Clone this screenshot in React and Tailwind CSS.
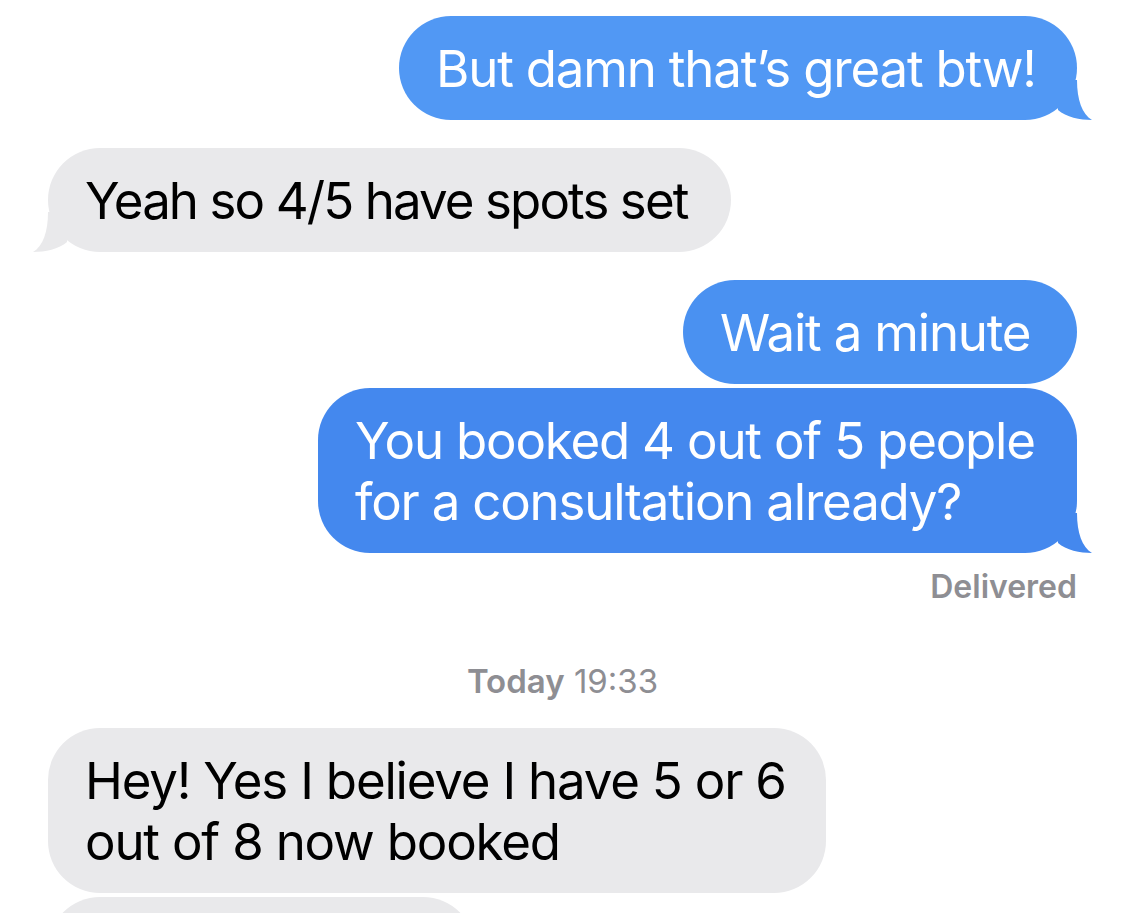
import React from "react";

// iMessage bubble tail, drawn for the right side; the left one is mirrored
const Tail = ({ side, color }) => (
    <svg
        width="40"
        height="40"
        viewBox="0 0 40 40"
        className={
            side === "right"
                ? "absolute bottom-0 right-[-15px]"
                : "absolute bottom-0 left-[-15px] -scale-x-100"
        }
    >
        <path d="M25 0 C25 20 30 34 40 40 C28 40 14 37 6 30 L6 0 Z" fill={color} />
    </svg>
);

const Bubble = ({ from, color, tail, className = "", children }) => {
    const mine = from === "me";
    return (
        <div
            className={`relative whitespace-nowrap rounded-[52px] px-[37px] py-[21.5px] text-[51px] leading-[61px] tracking-[-1.2px] ${
                mine ? "self-end text-white" : "self-start text-black"
            } ${className}`}
            style={{ backgroundColor: color }}
        >
            {children}
            {tail && <Tail side={mine ? "right" : "left"} color={color} />}
        </div>
    );
};

export default function App() {
    return (
        <div className="h-[913px] w-full overflow-hidden bg-white font-['Inter','Noto_Sans',sans-serif]">
            <div className="flex flex-col px-[48px] pt-[16px]">
                <Bubble from="me" color="#5198f4" tail className="w-[678px]">
                    But damn that’s great btw!
                </Bubble>

                <Bubble from="them" color="#e9e9eb" tail className="mt-[28px] w-[683px] tracking-[-1.9px]">
                    Yeah so 4/5 have spots set
                </Bubble>

                <Bubble from="me" color="#4a91f1" className="mt-[28px] w-[394px] tracking-[-0.6px]">
                    Wait a minute
                </Bubble>

                <Bubble from="me" color="#4488ee" tail className="mt-[4px] w-[759px]">
                    You booked 4 out of 5 people
                    <br />
                    for a consultation already?
                </Bubble>

                <div className="mt-[16px] text-right text-[32px] font-semibold leading-[36px] text-[#8e8e93]">
                    Delivered
                </div>

                <div className="mt-[58px] text-center text-[33px] leading-[36px] text-[#8e8e93]">
                    <span className="font-semibold">Today</span> 19:33
                </div>

                <Bubble from="them" color="#e9e9eb" className="mt-[29px] w-[778px]">
                    Hey! Yes I believe I have 5 or 6
                    <br />
                    out of 8 now booked
                </Bubble>

                <Bubble from="them" color="#e9e9eb" className="mt-[4px] w-[427px]">
                    &nbsp;
                </Bubble>
            </div>
        </div>
    );
}
